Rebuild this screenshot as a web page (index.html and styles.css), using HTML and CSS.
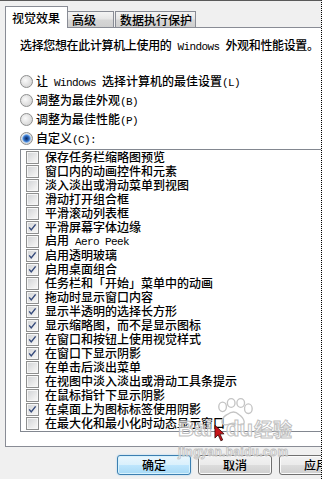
FILE: index.html
```html
<!DOCTYPE html>
<html lang="zh-CN">
<head>
<meta charset="UTF-8">
<title>性能选项</title>
<link rel="stylesheet" href="styles.css">
</head>
<body>
<div class="window">
    <div class="tabs">
        <div class="tab active">视觉效果</div>
        <div class="tab adv">高级</div>
        <div class="tab dep">数据执行保护</div>
    </div>

    <div class="panel">
        <p class="intro">选择您想在此计算机上使用的<span class="lat"> Windows </span>外观和性能设置。</p>

        <div class="radios">
            <div class="radio"><span class="dot"></span><span>让<span class="lat"> Windows </span>选择计算机的最佳设置<span class="lat">(L)</span></span></div>
            <div class="radio"><span class="dot"></span><span>调整为最佳外观<span class="lat">(B)</span></span></div>
            <div class="radio"><span class="dot"></span><span>调整为最佳性能<span class="lat">(P)</span></span></div>
            <div class="radio"><span class="dot sel"></span><span>自定义<span class="lat">(C):</span></span></div>
        </div>

        <div class="list">
            <div class="item"><span class="box"></span><span>保存任务栏缩略图预览</span></div>
            <div class="item"><span class="box"></span><span>窗口内的动画控件和元素</span></div>
            <div class="item"><span class="box"></span><span>淡入淡出或滑动菜单到视图</span></div>
            <div class="item"><span class="box"></span><span>滑动打开组合框</span></div>
            <div class="item"><span class="box"></span><span>平滑滚动列表框</span></div>
            <div class="item"><span class="box on"><svg viewBox="0 0 13 13"><path d="M2.6 6.4 L5 9.4 L10.2 2.8"/></svg></span><span>平滑屏幕字体边缘</span></div>
            <div class="item"><span class="box"></span><span>启用<span class="lat"> Aero Peek</span></span></div>
            <div class="item"><span class="box on"><svg viewBox="0 0 13 13"><path d="M2.6 6.4 L5 9.4 L10.2 2.8"/></svg></span><span>启用透明玻璃</span></div>
            <div class="item"><span class="box on"><svg viewBox="0 0 13 13"><path d="M2.6 6.4 L5 9.4 L10.2 2.8"/></svg></span><span>启用桌面组合</span></div>
            <div class="item"><span class="box"></span><span>任务栏和「开始」菜单中的动画</span></div>
            <div class="item"><span class="box on"><svg viewBox="0 0 13 13"><path d="M2.6 6.4 L5 9.4 L10.2 2.8"/></svg></span><span>拖动时显示窗口内容</span></div>
            <div class="item"><span class="box on"><svg viewBox="0 0 13 13"><path d="M2.6 6.4 L5 9.4 L10.2 2.8"/></svg></span><span>显示半透明的选择长方形</span></div>
            <div class="item"><span class="box on"><svg viewBox="0 0 13 13"><path d="M2.6 6.4 L5 9.4 L10.2 2.8"/></svg></span><span>显示缩略图，而不是显示图标</span></div>
            <div class="item"><span class="box on"><svg viewBox="0 0 13 13"><path d="M2.6 6.4 L5 9.4 L10.2 2.8"/></svg></span><span>在窗口和按钮上使用视觉样式</span></div>
            <div class="item"><span class="box on"><svg viewBox="0 0 13 13"><path d="M2.6 6.4 L5 9.4 L10.2 2.8"/></svg></span><span>在窗口下显示阴影</span></div>
            <div class="item"><span class="box"></span><span>在单击后淡出菜单</span></div>
            <div class="item"><span class="box"></span><span>在视图中淡入淡出或滑动工具条提示</span></div>
            <div class="item"><span class="box"></span><span>在鼠标指针下显示阴影</span></div>
            <div class="item"><span class="box on"><svg viewBox="0 0 13 13"><path d="M2.6 6.4 L5 9.4 L10.2 2.8"/></svg></span><span>在桌面上为图标标签使用阴影</span></div>
            <div class="item"><span class="box"></span><span>在最大化和最小化时动态显示窗口</span></div>
        </div>
    </div>

    <div class="buttons">
        <div class="btn default">确定</div>
        <div class="btn">取消</div>
        <div class="btn">应用</div>
    </div>

    <!-- watermark + cursor over the screenshot -->
    <div class="watermark">
        <svg class="paw" viewBox="0 0 44 32">
            <ellipse cx="9" cy="9" rx="4" ry="5"/>
            <ellipse cx="18" cy="5" rx="4" ry="4.5"/>
            <ellipse cx="28" cy="5" rx="4" ry="4.5"/>
            <ellipse cx="36" cy="11" rx="4" ry="5"/>
            <path d="M12 28 C6 28 8 20 14 17 C18 14 22 13 26 17 C32 21 34 28 28 28 C24 28 22 26 20 26 C17 26 16 28 12 28 Z"/>
        </svg>
        <span class="wm-bai">Bai</span>
        <span class="wm-du">du</span>
        <span class="wm-jy">经验</span>
        <span class="wm-url">jingyan.baidu.com</span>
    </div>
    <svg class="cursor" viewBox="0 0 12 20">
        <path d="M1 1 L1 15 L4.5 11.5 L7.5 18 L9.5 17 L6.6 10.6 L11 10.4 Z"/>
    </svg>
</div>
</body>
</html>
```

FILE: styles.css
```css
body {
    margin: 0;
    background: #f0f0f0;
    font-family: "Noto Sans CJK SC", "Noto Sans CJK JP", sans-serif;
    font-size: 12px;
    font-weight: 500;
    color: #000;
}
.window {
    position: relative;
    width: 322px;
    height: 479px;
    box-sizing: border-box;
    border-top: 1px solid #5a5a5a;
    border-right: 1px dotted #000;
    overflow: hidden;
    background: #f0f0f0;
}
.lat {
    font-family: "Liberation Mono", monospace;
    font-size: 11px;
    font-weight: normal;
    letter-spacing: -0.6px;
    white-space: pre;
}

/* tabs */
.tabs {
    display: flex;
    align-items: flex-end;
    height: 26px;
    padding-left: 5px;
}
.tab {
    height: 15px;
    line-height: 15px;
    padding: 0 4px;
    border: 1px solid #898c95;
    border-bottom: none;
    background: linear-gradient(#f4f4f4, #e6e6e6 45%, #d6d6d6 55%, #cfcfcf);
    white-space: nowrap;
}
.tab.active {
    position: relative;
    z-index: 2;
    height: 21px;
    line-height: 21px;
    width: 49px;
    padding: 0 6px;
    margin-bottom: -1px;
    background: #fff;
}
.tab.adv {
    width: 37px;
    margin-left: -1px;
}
.tab.dep {
    margin-left: 1px;
    padding: 0 3px 0 4px;
}

/* panel */
.panel {
    width: 360px;
    height: 418px;
    margin-left: 5px;
    padding-left: 14px;
    border: 1px solid #898c95;
    border-right: none;
    background: #fff;
}
.intro {
    margin: 10px 0 0;
    height: 14px;
    line-height: 14px;
    white-space: nowrap;
    letter-spacing: -0.35px;
}
.intro .lat {
    letter-spacing: -0.6px;
}
.radios {
    margin-top: 20px;
}
.radio {
    display: flex;
    align-items: center;
    height: 19px;
    line-height: 14px;
    white-space: nowrap;
}
.dot {
    flex: none;
    width: 11px;
    height: 11px;
    margin-right: 3px;
    border: 1px solid #8e8f8f;
    border-radius: 50%;
    background: radial-gradient(circle at 40% 40%, #fafafa, #d9d9d9 70%, #c4c4c4);
}
.dot.sel {
    background:
        radial-gradient(circle, #0e2b5c 0, #1c4a92 1.5px, #3c7ad0 3px, #8fbdf0 4px, transparent 4.6px),
        radial-gradient(circle at 40% 40%, #fafafa, #d9d9d9 70%, #c4c4c4);
}

/* list of options */
.list {
    margin-top: 1px;
    padding-bottom: 1px;
    border: 1px solid #828790;
    border-right: none;
}
.item {
    display: flex;
    align-items: center;
    height: 14px;
    line-height: 14px;
    padding-left: 5px;
    white-space: nowrap;
}
.box {
    flex: none;
    width: 11px;
    height: 11px;
    margin-right: 6px;
    border: 1px solid #8e8f8f;
    box-shadow: inset 0 0 0 1px #f6f6f6;
    background: linear-gradient(135deg, #cfd1d4, #eeeeee 70%, #f8f8f8);
}
.box svg {
    display: block;
    width: 11px;
    height: 11px;
}
.box svg path {
    fill: none;
    stroke: #34497a;
    stroke-width: 1.7;
}

/* buttons */
.buttons {
    display: flex;
    gap: 7px;
    margin-top: 8px;
    padding-left: 117px;
}
.btn {
    flex: none;
    width: 72px;
    height: 18px;
    line-height: 18px;
    text-align: center;
    border: 1px solid #707070;
    border-radius: 3px;
    box-shadow: inset 0 0 0 1px #fbfbfb;
    background: linear-gradient(#f2f2f2, #ebebeb 50%, #dddddd 50%, #cfcfcf);
}
.btn.default {
    border-color: #3c7fb1;
    box-shadow: inset 0 0 0 1px #d7f2fd, 0 0 2px #9fd2f0;
    background: linear-gradient(#eaf6fd, #d9f0fc 50%, #bee6fd 50%, #a7d9f5);
}

/* overlay */
.watermark {
    position: absolute;
    left: 176px;
    top: 392px;
    width: 120px;
    height: 70px;
    pointer-events: none;
}
.paw {
    position: absolute;
    left: 38px;
    top: 5px;
    width: 42px;
    height: 31px;
}
.paw ellipse,
.paw path {
    fill: rgba(255,255,255,0.5);
    stroke: #c4c4c4;
    stroke-width: 1.4;
}
.wm-bai,
.wm-du,
.wm-jy {
    position: absolute;
    top: 24px;
    font-family: "Liberation Sans", sans-serif;
    font-weight: bold;
    font-size: 22px;
    line-height: 24px;
    color: rgba(255,255,255,0.6);
    -webkit-text-stroke: 1px #c0c0c0;
}
.wm-bai { left: 2px; }
.wm-du { left: 50px; }
.wm-jy {
    left: 78px;
    font-family: "Noto Sans CJK SC", sans-serif;
    font-size: 19px;
}
.wm-url {
    position: absolute;
    left: 2px;
    top: 52px;
    font-family: "Liberation Sans", sans-serif;
    font-weight: bold;
    font-size: 12px;
    line-height: 14px;
    color: rgba(255,255,255,0.5);
    -webkit-text-stroke: 0.8px #c0c0c0;
    letter-spacing: 0.3px;
}
.cursor {
    position: absolute;
    left: 214px;
    top: 423px;
    width: 11px;
    height: 19px;
}
.cursor path {
    fill: #c8141a;
    stroke: #2a0000;
    stroke-width: 0.8;
}
```
